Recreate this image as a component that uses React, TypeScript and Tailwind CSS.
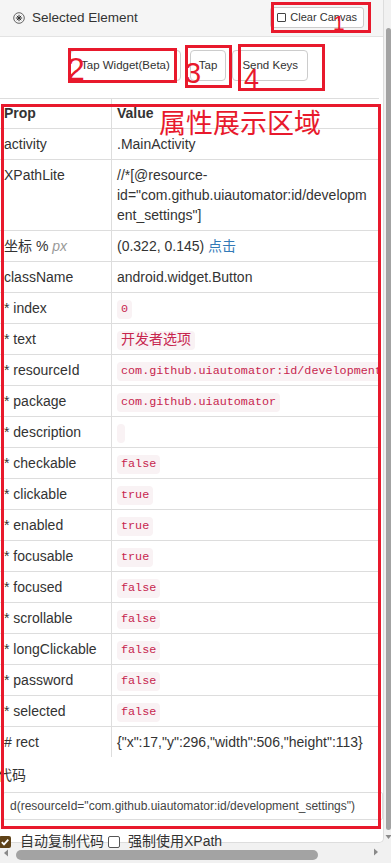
import React from 'react';

const sans = "font-['Liberation_Sans','Noto_Sans_CJK_SC',sans-serif]";

function Code({ children, wide }: { children?: React.ReactNode; wide?: boolean }) {
  return (
    <code
      className={`inline-block h-[19px] min-w-[8px] px-[4px] rounded-[4px] bg-[#f9f2f4] text-[#c7254e] align-middle leading-[19px] font-['Liberation_Mono','Noto_Sans_CJK_SC',monospace] ${
        wide ? 'text-[14px]' : 'text-[11.75px]'
      }`}
    >
      {children}
    </code>
  );
}

function Row({ k, children, tall }: { k: React.ReactNode; children: React.ReactNode; tall?: boolean }) {
  return (
    <div className="flex border-t border-[#ddd]">
      <div className="w-[112px] shrink-0 border-r border-[#ddd] pl-[4px] py-[5px] leading-[20px] whitespace-nowrap">{k}</div>
      <div className={`w-[267px] shrink-0 pl-[5px] py-[5px] leading-[20px] whitespace-nowrap ${tall ? '' : 'h-[30px]'}`}>
        {children}
      </div>
    </div>
  );
}

const flags: [string, string][] = [
  ['checkable', 'false'],
  ['clickable', 'true'],
  ['enabled', 'true'],
  ['focusable', 'true'],
  ['focused', 'false'],
  ['scrollable', 'false'],
  ['longClickable', 'false'],
  ['password', 'false'],
  ['selected', 'false'],
];

export default function App() {
  return (
    <div className={`relative w-[391px] h-[863px] overflow-hidden bg-[#f1f1f1] text-[#333] ${sans}`}>
      <div className="flex">
        {/* panel */}
        <div className="w-[384px] h-[843px] flex flex-col bg-white border-r border-b border-[#ddd] rounded-br-[5px]">
          {/* header */}
          <div className="h-[37px] shrink-0 flex items-center justify-between bg-[#f5f5f5] border-b border-[#e3e3e3] pl-[13px] pr-[19px]">
            <div className="flex items-center gap-[7px] text-[13.5px] text-[#333]">
              <svg width="12" height="12" viewBox="0 0 12 12">
                <circle cx="6" cy="6" r="5.3" fill="none" stroke="#555" strokeWidth="0.9" />
                <path d="M6 2.8v6.4M2.8 6h6.4M3.8 3.8l4.4 4.4M8.2 3.8l-4.4 4.4" stroke="#333" strokeWidth="1" />
              </svg>
              <span>Selected Element</span>
            </div>
            <button className="h-[21px] mt-[-2px] flex items-center gap-[4px] px-[6px] bg-white border border-[#ccc] rounded-[3px] text-[11px] text-[#333]">
              <span className="w-[9px] h-[9px] border border-[#444] rounded-[1px]" />
              Clear Canvas
            </button>
          </div>

          {/* buttons */}
          <div className="h-[61px] shrink-0 flex items-start pt-[13px] pl-[70px] text-[11.5px] text-[#333]">
            <button className="h-[31px] px-[10px] bg-white border border-[#ccc] rounded-[4px]">Tap Widget(Beta)</button>
            <button className="h-[31px] px-[8px] ml-[9px] bg-white border border-[#ccc] rounded-[4px]">Tap</button>
            <button className="h-[31px] px-[9px] ml-[6px] bg-white border border-[#ccc] rounded-[4px]">Send Keys</button>
          </div>

          {/* table */}
          <div className="w-[381px] shrink-0 overflow-hidden text-[14px]">
            <div className="w-[379px]">
              <div className="flex border-t border-[#ddd] font-bold">
                <div className="w-[112px] h-[29px] border-r border-[#ddd] pl-[4px] leading-[29px]">Prop</div>
                <div className="pl-[5px] leading-[29px]">Value</div>
              </div>
              <Row k="activity">.MainActivity</Row>
              <Row k="XPathLite" tall>
                //*[@resource-
                <br />
                id="com.github.uiautomator:id/developm
                <br />
                ent_settings"]
              </Row>
              <Row
                k={
                  <>
                    坐标 % <i className="text-[#999]">px</i>
                  </>
                }
              >
                (0.322, 0.145) <span className="text-[#337ab7]">点击</span>
              </Row>
              <Row k="className">android.widget.Button</Row>
              <Row k="* index">
                <Code>0</Code>
              </Row>
              <Row k="* text">
                <Code wide>开发者选项</Code>
              </Row>
              <Row k="* resourceId">
                <Code>com.github.uiautomator:id/development_settings</Code>
              </Row>
              <Row k="* package">
                <Code>com.github.uiautomator</Code>
              </Row>
              <Row k="* description">
                <Code />
              </Row>
              {flags.map(([k, v]) => (
                <Row key={k} k={`* ${k}`}>
                  <Code>{v}</Code>
                </Row>
              ))}
              <Row k="# rect">{'{"x":17,"y":296,"width":506,"height":113}'}</Row>
            </div>
          </div>

          {/* code */}
          <div className="mt-[8px] ml-[-2px] h-[20px] shrink-0 leading-[20px] text-[14px]">代码</div>
          <div className="mt-[7px] ml-[3px] w-[380px] h-[28px] shrink-0 border border-[#ddd] rounded-[2px] pl-[6px] flex items-center text-[12px] text-[#444] whitespace-nowrap">
            d(resourceId="com.github.uiautomator:id/development_settings")
          </div>
          <div className="mt-[14px] h-[15px] shrink-0 flex items-center text-[14px] whitespace-nowrap">
            <span className="ml-[-1px] w-[12px] h-[12px] rounded-[2px] bg-[#5f4217] flex items-center justify-center">
              <svg width="10" height="10" viewBox="0 0 10 10">
                <path d="M1.8 5.2l2.2 2.2 4.3-4.8" fill="none" stroke="white" strokeWidth="1.8" />
              </svg>
            </span>
            <span className="ml-[9px]">自动复制代码</span>
            <span className="ml-[4px] w-[12px] h-[12px] rounded-[2px] border border-[#555] bg-white" />
            <span className="ml-[8px]">强制使用XPath</span>
          </div>
        </div>

        {/* vertical scrollbar */}
        <div className="w-[7px] h-[843px] flex flex-col items-end">
          <div className="mt-[28px] h-[802px] w-[5px] rounded-full bg-[#a3a3a3]" />
          <svg className="mt-[4px] mr-[-1px]" width="7" height="6" viewBox="0 0 7 6">
            <path d="M0.5 1h6L3.5 5z" fill="#8a8a8a" />
          </svg>
        </div>
      </div>

      {/* horizontal scrollbar */}
      <div className="h-[20px] flex items-center pl-[3px]">
        <svg width="6" height="8" viewBox="0 0 6 8">
          <path d="M5 0.5v7L1 4z" fill="#8a8a8a" />
        </svg>
        <div className="ml-[7px] mt-[3px] w-[302px] h-[10px] rounded-full bg-[#a3a3a3]" />
        <svg className="ml-[55px] mt-[-2px]" width="6" height="8" viewBox="0 0 6 8">
          <path d="M1 0.5v7L5 4z" fill="#8a8a8a" />
        </svg>
      </div>

      {/* annotations */}
      <div className="absolute inset-0 pointer-events-none text-[#e8192c] font-['Liberation_Sans','Noto_Sans_CJK_SC',sans-serif]">
        <div className="absolute left-[271px] top-[2px] w-[100px] h-[31px] border-[3px] border-[#e8192c]" />
        <div className="absolute left-[333px] top-[12px] text-[21px] leading-none">1</div>
        <div className="absolute left-[68px] top-[48px] w-[109px] h-[35px] border-[3px] border-[#e8192c]" />
        <div className="absolute left-[67px] top-[53px] text-[32px] leading-none">2</div>
        <div className="absolute left-[185px] top-[45px] w-[47px] h-[43px] border-[3px] border-[#e8192c]" />
        <div className="absolute left-[185px] top-[59px] text-[29px] leading-none">3</div>
        <div className="absolute left-[238px] top-[44px] w-[87px] h-[47px] border-[3px] border-[#e8192c]" />
        <div className="absolute left-[244px] top-[66px] text-[27px] leading-none">4</div>
        <div className="absolute left-[1px] top-[104px] w-[380px] h-[725px] border-[3px] border-[#e8192c]" />
        <div className="absolute left-[159px] top-[106px] text-[27px] leading-[32px] font-['Noto_Sans_CJK_SC',sans-serif]">
          属性展示区域
        </div>
      </div>
    </div>
  );
}
